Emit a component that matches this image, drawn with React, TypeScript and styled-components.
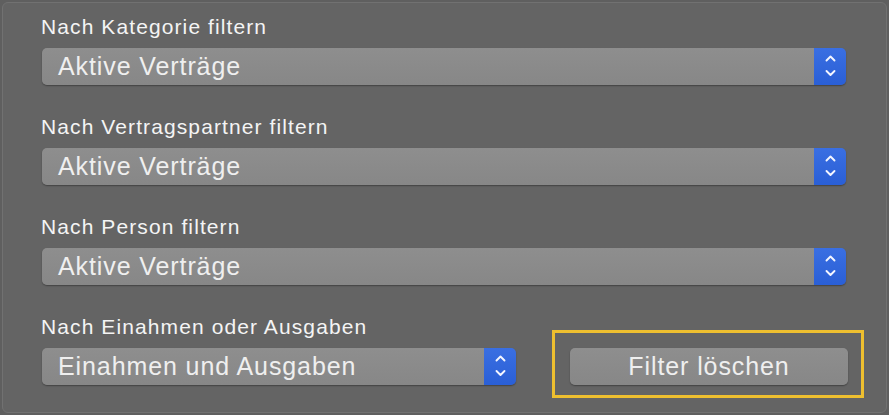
import styled, { createGlobalStyle } from 'styled-components';

const GlobalStyle = createGlobalStyle`
  html, body {
    margin: 0;
    padding: 0;
    background: #5f5f5f;
    font-family: "Liberation Sans", Arial, sans-serif;
    -webkit-font-smoothing: antialiased;
  }
`;

const Panel = styled.div`
  box-sizing: border-box;
  width: 885px;
  height: 411px;
  margin: 2px 0 0 2px;
  padding: 12px 40px 0 38px;
  background: #646464;
  border: 1px solid #717171;
  border-radius: 6px;
  display: flex;
  flex-direction: column;
  gap: 30px;
`;

const Group = styled.div`
  display: flex;
  flex-direction: column;
  gap: 9px;
`;

const Label = styled.div`
  color: #f4f4f4;
  font-size: 21px;
  letter-spacing: 1.1px;
  line-height: 24px;
  white-space: nowrap;
`;

const Popup = styled.div<{ $width?: number }>`
  box-sizing: border-box;
  width: ${(p) => (p.$width ? `${p.$width}px` : 'calc(100% - 1px)')};
  height: 37px;
  margin-left: 1px;
  display: flex;
  border-radius: 5px;
  overflow: hidden;
  box-shadow: 0 1px 1.5px rgba(0, 0, 0, 0.35);
`;

const PopupValue = styled.div`
  flex: 1;
  background: linear-gradient(#8e8e8e, #878787);
  color: #efefef;
  font-size: 25px;
  letter-spacing: 0.9px;
  line-height: 37px;
  padding-left: 16px;
  white-space: nowrap;
`;

const Stepper = styled.div`
  width: 32px;
  background: linear-gradient(#3a6fe2, #2a5fd6);
  display: flex;
  align-items: center;
  justify-content: center;
`;

const BottomRow = styled.div`
  display: flex;
  align-items: flex-start;
  gap: 36px;
  margin-right: -18px;
`;

const FocusRing = styled.div`
  margin-top: 15px;
  border: 3px solid #eebf2f;
  padding: 15px 13px 10px 15px;
`;

const ClearButton = styled.button`
  box-sizing: border-box;
  width: 278px;
  height: 37px;
  border: none;
  border-radius: 5px;
  background: linear-gradient(#8e8e8e, #878787);
  box-shadow: 0 1px 1.5px rgba(0, 0, 0, 0.35);
  color: #efefef;
  font-family: "Liberation Sans", Arial, sans-serif;
  font-size: 25px;
  letter-spacing: 0.9px;
  padding: 0;
  display: block;
`;

const Chevrons = () => (
  <svg width="13" height="24" viewBox="0 0 13 24">
    <path d="M2.5 5.5 L6.5 1.5 L10.5 5.5" fill="none" stroke="#f4f6ff" strokeWidth="1.9" strokeLinecap="round" strokeLinejoin="round" />
    <path d="M2.5 16 L6.5 20 L10.5 16" fill="none" stroke="#f4f6ff" strokeWidth="1.9" strokeLinecap="round" strokeLinejoin="round" />
  </svg>
);

const Select = ({ value, width }: { value: string; width?: number }) => (
  <Popup $width={width}>
    <PopupValue>{value}</PopupValue>
    <Stepper>
      <Chevrons />
    </Stepper>
  </Popup>
);

const filters = ['Nach Kategorie filtern', 'Nach Vertragspartner filtern', 'Nach Person filtern'];

export default function App() {
  return (
    <>
      <GlobalStyle />
      <Panel>
        {filters.map((f) => (
          <Group key={f}>
            <Label>{f}</Label>
            <Select value="Aktive Verträge" />
          </Group>
        ))}
        <BottomRow>
          <Group>
            <Label>Nach Einahmen oder Ausgaben</Label>
            <Select value="Einahmen und Ausgaben" width={474} />
          </Group>
          <FocusRing>
            <ClearButton type="button">Filter löschen</ClearButton>
          </FocusRing>
        </BottomRow>
      </Panel>
    </>
  );
}
